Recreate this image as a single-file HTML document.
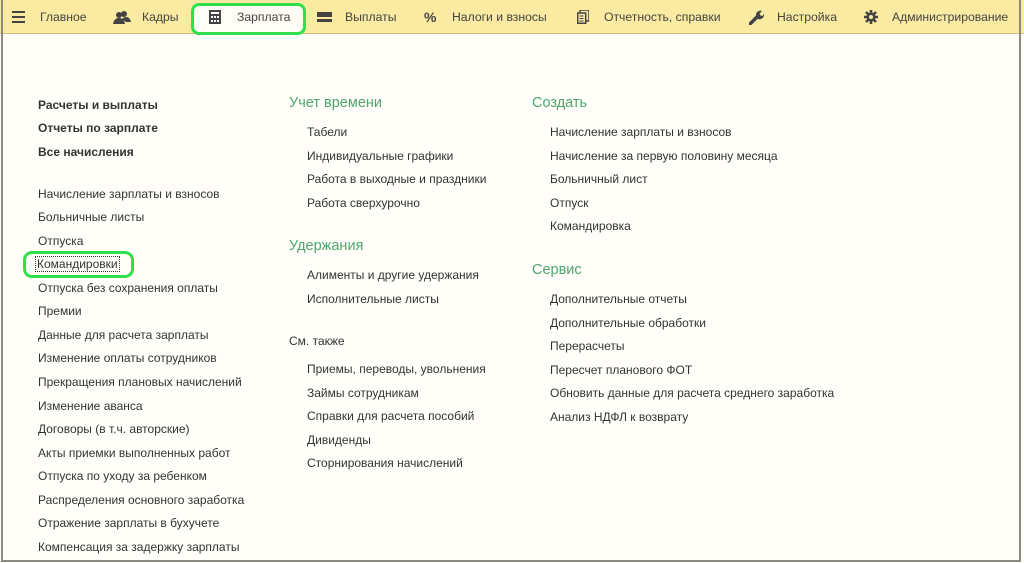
<!DOCTYPE html>
<html><head><meta charset="utf-8"><style>
*{margin:0;padding:0;box-sizing:border-box}
body{width:1024px;height:563px;overflow:hidden;background:#fffef9;font-family:"Liberation Sans",Arial,sans-serif;font-size:12px;color:#333;position:relative}
.frame{position:absolute;left:1px;top:0;width:1020px;height:562px;border:2px solid #8a8a85;border-top:none}
.bar{position:absolute;left:0;top:0;width:1024px;height:34px;background:#fbeaa2;border-bottom:1px solid #cdbd7a}
.bar span{position:absolute;top:10px;font-size:12.2px;color:#444}
.t{position:absolute;white-space:nowrap;line-height:14px}
.b{font-weight:bold}
.h{position:absolute;color:#4fa56f;font-size:14.5px;white-space:nowrap}
.ring{position:absolute;border:3px solid #2fe04a;border-radius:8px}
</style></head><body>
<div class="bar">
<div style="position:absolute;left:12px;top:11px;width:13px;height:12px;border-top:2px solid #444;border-bottom:2px solid #444"><div style="margin-top:3px;height:2px;background:#444"></div></div>
<span style="left:40px">Главное</span>
<svg style="position:absolute;left:113px;top:10px" width="18" height="14" viewBox="0 0 18 14"><circle cx="11" cy="4" r="3" fill="#444"/><circle cx="6" cy="5" r="3" fill="#444"/><path d="M0 14 Q1 8 6 8 Q11 8 12 14Z M9 9 Q11 7 13 7 Q17 7 18 12 L13 12Z" fill="#444"/></svg>
<span style="left:142px">Кадры</span>
<div style="position:absolute;left:317px;top:12px;width:15px;height:10px;background:#444;border-top:3px solid #444"><div style="margin-top:2px;height:2px;background:#fbeaa2"></div></div>
<span style="left:345px">Выплаты</span>
<span style="left:424px;top:9px;font-weight:bold;font-size:14px">%</span>
<span style="left:452px">Налоги и взносы</span>
<svg style="position:absolute;left:577px;top:10px" width="12" height="14" viewBox="0 0 12 14"><rect x="3" y="0" width="9" height="11" fill="none" stroke="#444" stroke-width="1.5"/><rect x="0.7" y="3" width="8" height="10.3" fill="#fbeaa2" stroke="#444" stroke-width="1.5"/><path d="M2.5 6h4M2.5 8.5h4M2.5 11h4" stroke="#444"/></svg>
<span style="left:604px">Отчетность, справки</span>
<svg style="position:absolute;left:749px;top:9px" width="16" height="16" viewBox="0 0 16 16"><path d="M1 15 L8 8" stroke="#444" stroke-width="3.5" stroke-linecap="round"/><path d="M7 7 A4.5 4.5 0 0 1 13 2 L10.5 4.5 L11.5 6.5 L13.5 7 L15 5 A4.5 4.5 0 0 1 9 10Z" fill="#444"/></svg>
<span style="left:777px">Настройка</span>
<svg style="position:absolute;left:864px;top:10px" width="14" height="14" viewBox="0 0 14 14"><circle cx="7" cy="7" r="4.5" fill="#444"/><g stroke="#444" stroke-width="2.6"><path d="M7 0v14M0 7h14M2 2l10 10M12 2L2 12"/></g><circle cx="7" cy="7" r="2" fill="#fbeaa2"/></svg>
<span style="left:892px">Администрирование</span>
</div>
<div class="frame"></div>
<div style="position:absolute;left:191px;top:3px;width:115px;height:32px;border-radius:8px;background:#fffdf5"></div>
<svg style="position:absolute;left:209px;top:10px" width="12" height="14" viewBox="0 0 12 14"><rect x="0" y="0" width="12" height="14" fill="#444"/><g fill="#fff"><rect x="2" y="2" width="8" height="2"/><rect x="2" y="6" width="2" height="2"/><rect x="5" y="6" width="2" height="2"/><rect x="8" y="6" width="2" height="2"/><rect x="2" y="10" width="2" height="2"/><rect x="5" y="10" width="2" height="2"/><rect x="8" y="10" width="2" height="2"/></g></svg>
<span style="position:absolute;left:237px;top:10px;font-size:12.2px;color:#444">Зарплата</span>
<div class="ring" style="left:191px;top:3px;width:115px;height:32px"></div>

<div class="t b" style="left:38px;top:98px">Расчеты и выплаты</div>
<div class="t b" style="left:38px;top:121px">Отчеты по зарплате</div>
<div class="t b" style="left:38px;top:145px">Все начисления</div>
<div class="t" style="left:38px;top:187px">Начисление зарплаты и взносов</div>
<div class="t" style="left:38px;top:210px">Больничные листы</div>
<div class="t" style="left:38px;top:234px">Отпуска</div>
<div class="t" style="left:36px;top:257px;outline:1px dotted #333;padding:0 1px">Командировки</div>
<div class="ring" style="left:23px;top:251px;width:111px;height:27px;border-radius:9px"></div>
<div class="t" style="left:38px;top:281px">Отпуска без сохранения оплаты</div>
<div class="t" style="left:38px;top:304px">Премии</div>
<div class="t" style="left:38px;top:328px">Данные для расчета зарплаты</div>
<div class="t" style="left:38px;top:351px">Изменение оплаты сотрудников</div>
<div class="t" style="left:38px;top:375px">Прекращения плановых начислений</div>
<div class="t" style="left:38px;top:399px">Изменение аванса</div>
<div class="t" style="left:38px;top:422px">Договоры (в т.ч. авторские)</div>
<div class="t" style="left:38px;top:446px">Акты приемки выполненных работ</div>
<div class="t" style="left:38px;top:469px">Отпуска по уходу за ребенком</div>
<div class="t" style="left:38px;top:493px">Распределения основного заработка</div>
<div class="t" style="left:38px;top:516px">Отражение зарплаты в бухучете</div>
<div class="t" style="left:38px;top:540px">Компенсация за задержку зарплаты</div>

<div class="h" style="left:289px;top:95px">Учет времени</div>
<div class="t" style="left:307px;top:125px">Табели</div>
<div class="t" style="left:307px;top:149px">Индивидуальные графики</div>
<div class="t" style="left:307px;top:172px">Работа в выходные и праздники</div>
<div class="t" style="left:307px;top:196px">Работа сверхурочно</div>
<div class="h" style="left:289px;top:238px">Удержания</div>
<div class="t" style="left:307px;top:268px">Алименты и другие удержания</div>
<div class="t" style="left:307px;top:292px">Исполнительные листы</div>
<div class="t" style="left:289px;top:334px">См. также</div>
<div class="t" style="left:307px;top:362px">Приемы, переводы, увольнения</div>
<div class="t" style="left:307px;top:386px">Займы сотрудникам</div>
<div class="t" style="left:307px;top:409px">Справки для расчета пособий</div>
<div class="t" style="left:307px;top:433px">Дивиденды</div>
<div class="t" style="left:307px;top:456px">Сторнирования начислений</div>

<div class="h" style="left:532px;top:95px">Создать</div>
<div class="t" style="left:550px;top:125px">Начисление зарплаты и взносов</div>
<div class="t" style="left:550px;top:149px">Начисление за первую половину месяца</div>
<div class="t" style="left:550px;top:172px">Больничный лист</div>
<div class="t" style="left:550px;top:196px">Отпуск</div>
<div class="t" style="left:550px;top:219px">Командировка</div>
<div class="h" style="left:532px;top:262px">Сервис</div>
<div class="t" style="left:550px;top:292px">Дополнительные отчеты</div>
<div class="t" style="left:550px;top:316px">Дополнительные обработки</div>
<div class="t" style="left:550px;top:339px">Перерасчеты</div>
<div class="t" style="left:550px;top:363px">Пересчет планового ФОТ</div>
<div class="t" style="left:550px;top:386px">Обновить данные для расчета среднего заработка</div>
<div class="t" style="left:550px;top:410px">Анализ НДФЛ к возврату</div>
</body></html>
